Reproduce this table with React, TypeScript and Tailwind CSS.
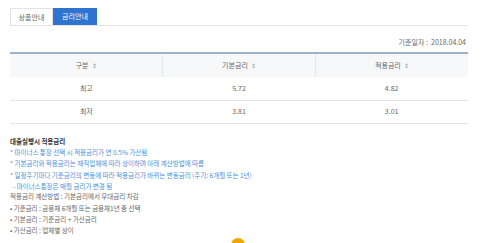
const rows = [
  { label: '최고', base: '5.72', applied: '4.82' },
  { label: '최저', base: '3.81', applied: '3.01' },
];

function SortMark() {
  return <span className="ml-[3px] text-[6px] text-[#999]">⇕</span>;
}

export default function App() {
  return (
    <div
      className="relative h-[243px] w-[500px] overflow-hidden bg-white pl-[10px] pr-[32px] pt-[8px] text-[#555]"
      style={{ fontFamily: '"Noto Sans CJK KR", "Noto Sans", sans-serif' }}
    >
      <div className="flex border-b border-[#e3e3e3]">
        <div className="flex h-[17px] w-[43px] items-center justify-center border border-b-0 border-[#e3e3e3] text-[7px] text-[#666]">
          상품안내
        </div>
        <div className="flex h-[17px] w-[44px] items-center justify-center bg-[#2f74d0] text-[7px] text-white">
          금리안내
        </div>
      </div>

      <div className="mt-[10px] flex h-[12px] items-center justify-end pr-[2px] text-[7px] text-[#666]">
        기준일자 : &nbsp;2018.04.04
      </div>

      <table className="mt-[4px] w-full border-t-2 border-[#9bb1cc] text-[7px] text-[#666]">
        <thead>
          <tr className="h-[24px] bg-[#f7f8fa]">
            <th className="w-1/3 font-normal">
              구분<SortMark />
            </th>
            <th className="w-1/3 border-l border-[#e6e6e6] font-normal">
              기본금리<SortMark />
            </th>
            <th className="w-1/3 border-l border-[#e6e6e6] font-normal">
              적용금리<SortMark />
            </th>
          </tr>
        </thead>
        <tbody>
          {rows.map((r) => (
            <tr key={r.label} className="h-[23px] border-b border-[#e6e6e6]">
              <td className="text-center">{r.label}</td>
              <td className="text-center">{r.base}</td>
              <td className="text-center">{r.applied}</td>
            </tr>
          ))}
        </tbody>
      </table>

      <div className="mt-[12px] flex flex-col text-[6.5px] leading-[11.4px]">
        <p className="font-bold text-[#333]">대출실행시 적용금리</p>
        <p className="text-[#4a90d9]">* 마이너스 통장 선택 시 적용금리가 연 0.5% 가산됨</p>
        <p className="text-[#4a90d9]">* 기본금리와 적용금리는 재직업체에 따라 상이하며 아래 계산방법에 따름</p>
        <p className="text-[#4a90d9]">* 일정주기마다 기준금리의 변동에 따라 적용금리가 바뀌는 변동금리 (주기: 6개월 또는 1년)</p>
        <p className="pl-[3px] leading-[10px] text-[#4a90d9]">- 마이너스통장은 매월 금리가 변경 됨</p>
        <p className="text-[#666]">적용금리 계산방법 : 기본금리에서 우대금리 차감</p>
        <p className="text-[#666]">• 기준금리 : 금융채 6개월 또는 금융채1년 중 선택</p>
        <p className="text-[#666]">• 기본금리 : 기준금리 + 가산금리</p>
        <p className="text-[#666]">• 가산금리 : 업체별 상이</p>
      </div>

      <div className="absolute left-[231px] top-[238px] h-[14px] w-[14px] rounded-full bg-[#f0a500]" />
    </div>
  );
}
